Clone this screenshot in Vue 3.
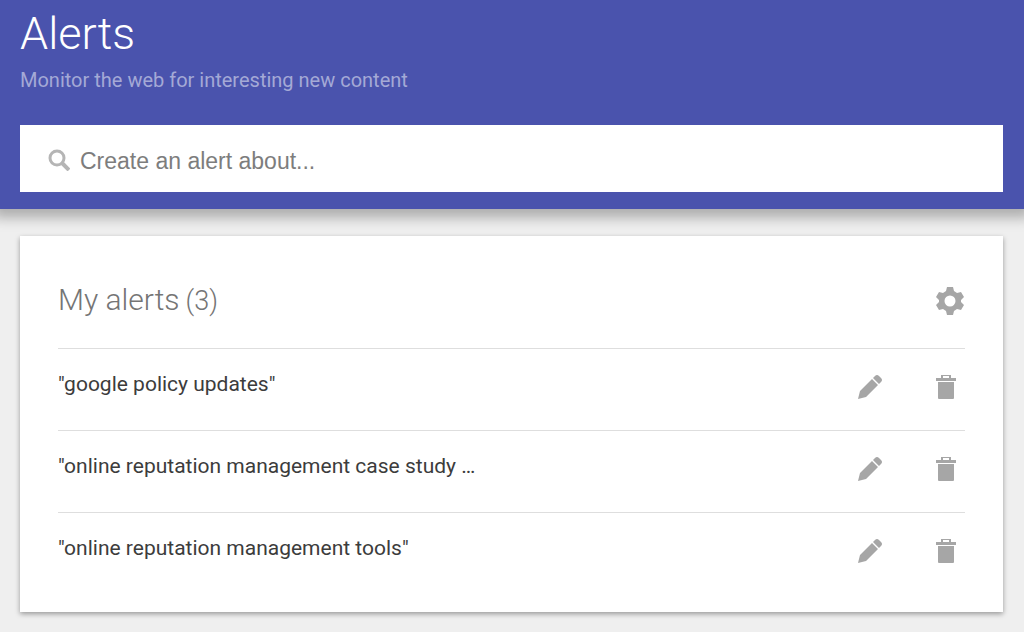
<script setup>
import { ref } from 'vue'

const query = ref('')
const alerts = ref([
  '"google policy updates"',
  '"online reputation management case study …',
  '"online reputation management tools"',
])
</script>

<template>
  <div class="page">
    <header class="banner">
      <h1>Alerts</h1>
      <p class="tagline">Monitor the web for interesting new content</p>
      <label class="search">
        <svg class="lens" viewBox="0 0 22 22" aria-hidden="true">
          <circle cx="9" cy="9" r="7" fill="none" stroke="#b5b5b5" stroke-width="3" />
          <path d="M14 14l7 7" fill="none" stroke="#b5b5b5" stroke-width="4" />
        </svg>
        <input v-model="query" type="text" placeholder="Create an alert about..." aria-label="Create an alert about" />
      </label>
    </header>

    <main class="card">
      <div class="card-head">
        <h2>My alerts<span class="count">({{ alerts.length }})</span></h2>
        <button type="button" class="icon-button gear" aria-label="Settings">
          <svg viewBox="0 0 28 28" aria-hidden="true">
            <path
              fill-rule="evenodd"
              d="M11 0h6l1 4 3 2 4-1 3 5-3 3v2l3 3-3 5-4-1-3 2-1 4h-6l-1-4-3-2-4 1-3-5 3-3v-2l-3-3 3-5 4 1 3-2zM14 8.500a5.500 5.500 0 1 0 0 11a5.500 5.500 0 1 0 0-11z"
            />
          </svg>
        </button>
      </div>
      <ul class="list">
        <li v-for="alert in alerts" :key="alert" class="row">
          <span class="query">{{ alert }}</span>
          <button type="button" class="icon-button" :aria-label="`Edit ${alert}`">
            <svg viewBox="0 0 24 24" aria-hidden="true">
              <path d="M0 24l2-8L14 4l6 6L8 22zM15 3l2-2q2-2 4 0l2 2q2 2 0 4l-2 2z" />
            </svg>
          </button>
          <button type="button" class="icon-button" :aria-label="`Delete ${alert}`">
            <svg viewBox="0 0 24 24" aria-hidden="true">
              <path fill-rule="evenodd" d="M7 0h10v3h5v3H2V3h5zM9 1v2h6V1zM4 7h16v16q0 1-1 1H5q-1 0-1-1z" />
            </svg>
          </button>
        </li>
      </ul>
    </main>
  </div>
</template>

<style>
body {
  margin: 0;
  background: #efefef;
}
</style>

<style scoped>
.page {
  font-family: Roboto, "Liberation Sans", sans-serif;
  padding-bottom: 20px;
  overflow-x: clip;
}

.banner {
  padding: 8px 21px 17px 20px;
  background: #4a53ad;
  box-shadow: 0 2px 12px 7px rgba(0, 0, 0, 0.27);
}

h1 {
  margin: 0;
  color: #fff;
  font-size: 45px;
  font-weight: 300;
  line-height: 52px;
}

.tagline {
  margin: 8px 0 33px;
  color: #a4a9d6;
  font-size: 20px;
  line-height: 24px;
}

.search {
  display: flex;
  align-items: center;
  gap: 10px;
  height: 67px;
  padding: 0 28px;
  background: #fff;
}

.lens {
  flex: none;
  width: 22px;
  height: 22px;
  padding-top: 2px;
}

.search input {
  flex: 1;
  min-width: 0;
  padding: 4px 0 0;
  border: 0;
  outline: 0;
  background: none;
  color: #444;
  font: 23px/28px "Liberation Sans", Arial, sans-serif;
}

.search input::placeholder {
  color: #7d7d7d;
  opacity: 1;
}

.card {
  position: relative;
  margin: 27px 21px 0 20px;
  padding: 36px 38px 18px;
  background: #fff;
  box-shadow: 0 2px 5px rgba(0, 0, 0, 0.36);
}

.card-head {
  display: flex;
  align-items: center;
  justify-content: space-between;
  padding: 0 1px 19px 0;
}

h2 {
  display: flex;
  align-items: baseline;
  gap: 6px;
  margin: 0;
  color: #757575;
  font-size: 30px;
  font-weight: 300;
  line-height: 56px;
}

.count {
  font-size: 27px;
}

.icon-button {
  flex: none;
  display: block;
  padding: 0;
  border: 0;
  background: none;
  cursor: pointer;
}

.icon-button svg {
  display: block;
  width: 24px;
  height: 24px;
  fill: #a6a6a6;
}

.gear svg {
  width: 28px;
  height: 28px;
}

.list {
  margin: 0;
  padding: 0;
  list-style: none;
}

.row {
  display: flex;
  align-items: center;
  gap: 52px;
  box-sizing: border-box;
  height: 82px;
  padding: 0 7px 6px 0;
  border-top: 1px solid #dedede;
}

.query {
  flex: 1;
  min-width: 0;
  padding-bottom: 5px;
  color: #3c3c3c;
  font-size: 21px;
  line-height: 28px;
}
</style>
